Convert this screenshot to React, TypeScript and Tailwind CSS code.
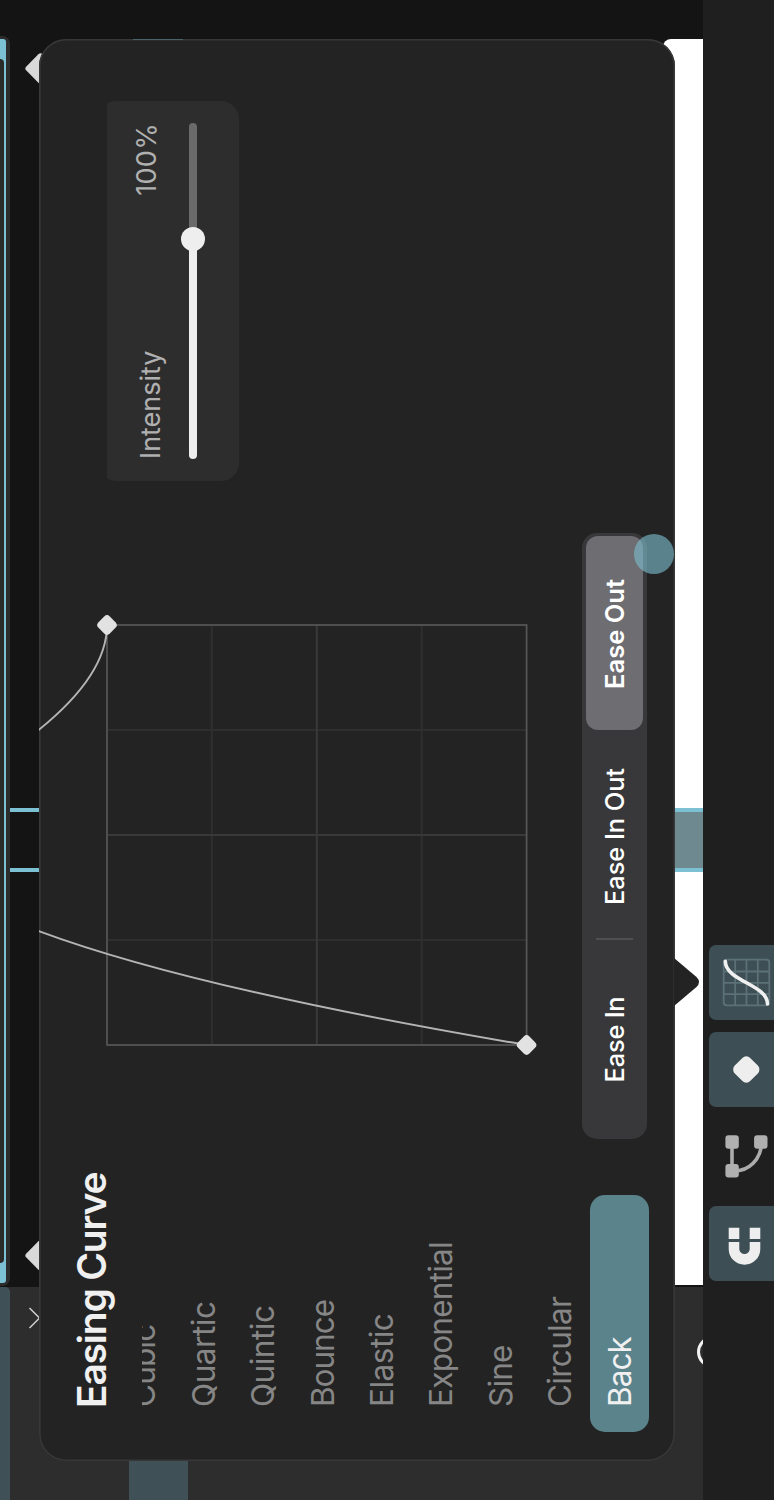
import React from "react";

const CURVES = [
  { name: "Cubic", tracking: "tracking-[-0.85px]" },
  { name: "Quartic", tracking: "tracking-[-0.45px]" },
  { name: "Quintic", tracking: "tracking-[-0.5px]" },
  { name: "Bounce", tracking: "tracking-[-1px]" },
  { name: "Elastic", tracking: "tracking-[-0.5px]" },
  { name: "Exponential", tracking: "tracking-[-0.75px]" },
  { name: "Sine", tracking: "tracking-[-0.8px]" },
  { name: "Circular", tracking: "tracking-[-0.7px]" },
  { name: "Back", tracking: "tracking-[-0.9px]" },
];

function CurveList() {
  return (
    <ul className="flex h-[507px] flex-col justify-end overflow-hidden">
      {CURVES.map(({ name, tracking }) => (
        <li
          key={name}
          className={`flex h-[59.4px] shrink-0 items-center rounded-[15px] pl-[25px] text-[31.5px] leading-none font-normal ${tracking} ${
            name === "Back" ? "bg-[#5a838c] text-[#f0f0f0]" : "text-[#868686]"
          }`}
        >
          {name}
        </li>
      ))}
    </ul>
  );
}

function Graph() {
  return (
    <svg className="block h-[543px] w-[606px]" viewBox="361 39 606 543" fill="none">
      <path
        d="M560 107V527M770 107V527M455 211.8H875M455 421.7H875"
        stroke="#2f2f2f"
        strokeWidth="2"
      />
      <path d="M665 107V527M455 316.8H875" stroke="#393939" strokeWidth="2" />
      <rect x="455" y="107" width="420" height="419.6" stroke="#575757" strokeWidth="1.7" />
      <path
        d="M455 526.6Q510.9 195.2 568.7 39.5C620 -90 700 -40 770.7 39.5Q825.4 107 875 107"
        stroke="#b4b4b4"
        strokeWidth="1.9"
      />
      <rect x="-8" y="-8" width="16" height="16" rx="4" transform="translate(455 526.6) rotate(45)" fill="#e2e2e2" />
      <rect x="-8" y="-8" width="16" height="16" rx="4" transform="translate(875 107) rotate(45)" fill="#e2e2e2" />
    </svg>
  );
}

function Segments() {
  return (
    <div className="flex h-[65px] w-[606px] items-center rounded-[15px] bg-[#38383a] text-[25.5px] text-white">
      <div className="flex w-[199px] justify-center pt-[2px] font-medium tracking-[-0.25px]">Ease In</div>
      <div className="h-[37px] w-[2px] bg-[#505053]" />
      <div className="flex w-[208px] justify-center pt-[2px] pr-[5px] font-medium tracking-[-0.1px]">Ease In Out</div>
      <div className="flex h-[57px] w-[194px] items-center justify-center rounded-[12px] bg-[#6e6d72] pt-[2px] pr-[2px] font-semibold tracking-[0px]">
        Ease Out
      </div>
    </div>
  );
}

function Intensity() {
  return (
    <div className="mt-[68px] h-[132px] w-[380px] overflow-hidden">
      <div className="-mt-2 h-[140px] rounded-[18px] bg-[#2d2d2d] px-[22px] pt-8">
        <div className="flex h-8 justify-between text-[27px] leading-8 font-normal text-[#b0b0b0]">
          <span className="pt-1 tracking-[-0.05px]">Intensity</span>
          <span className="tracking-[0.3px]">100%</span>
        </div>
        <div className="mt-[18px] flex h-6 items-center">
          <div className="h-2 w-[212px] rounded-l-full bg-[#eeeeee]" />
          <div className="relative -mx-1 size-6 shrink-0 rounded-full bg-[#eeeeee]" />
          <div className="h-2 grow rounded-r-full bg-[#6a6a6a]" />
        </div>
      </div>
    </div>
  );
}

function Popover() {
  return (
    <div className="absolute top-[39px] left-[39px]">
      <div className="flex h-[636px] w-[1422px] overflow-hidden rounded-[27px] bg-[#232323] pl-[29px] shadow-[inset_0_0_0_1.6px_#383838]">
        <div className="w-[237px]">
          <h1 className="mt-[29px] mb-[26px] pl-[24px] text-[39px] leading-[48px] font-semibold tracking-[-1.2px] whitespace-nowrap text-[#f0f0f0]">
            Easing Curve
          </h1>
          <CurveList />
        </div>
        <div className="ml-14">
          <Graph />
          <Segments />
        </div>
        <div className="ml-[52px]">
          <Intensity />
        </div>
      </div>
      <svg className="absolute top-[635px] left-[454px] h-[26px] w-[50px]" viewBox="0 0 50 26">
        <path d="M1 0H49L30 22.5Q25 27.5 20 22.5Z" fill="#232323" />
      </svg>
      <div className="absolute top-[595px] left-[887px] size-10 rounded-full bg-[#7abbca]/63" />
      <div className="absolute top-[94px] left-[1421px] h-[50px] w-px bg-[#4c6168]" />
    </div>
  );
}

function Toolbar() {
  const active = "h-[75px] w-[75px] rounded-[7px] bg-[#3d4f55]";
  return (
    <div className="relative flex h-[71px] gap-3 overflow-hidden bg-[#1f1f1f] pt-[6px] pl-[219px]">
      <svg className={active} viewBox="0 0 75 75" fill="#eeeeee">
        <path d="M42 19.7H53.3V30.3H42ZM42 40.7H53.3V51.3H42Z" />
        <path d="M39 19.7H32.1A15.8 15.8 0 0 0 32.1 51.3H39V40.7H32.1A5.2 5.2 0 0 1 32.1 30.3H39Z" />
      </svg>
      <svg className="h-[75px] w-[75px]" viewBox="0 0 75 75" fill="none">
        <path d="M52 23H23C22 40 35 52.5 52 52.5" stroke="#acacac" strokeWidth="3.6" />
        <g fill="#b0b0b0">
          <rect x="45.3" y="16.4" width="13.4" height="13.4" rx="3" />
          <rect x="45.3" y="45.1" width="13.4" height="13.4" rx="3" />
          <rect x="16.6" y="16.4" width="13.4" height="13.4" rx="3" />
        </g>
      </svg>
      <svg className={active} viewBox="0 0 75 75">
        <rect x="-10.9" y="-10.9" width="21.8" height="21.8" rx="5.5" transform="translate(37.5 37.3) rotate(45)" fill="#eeeeee" />
      </svg>
      <svg className={active} viewBox="0 0 75 75" fill="none">
        <g transform="translate(13.5 13.5)">
          <path d="M12.3 1V47M23.7 1V47M35 1V47M1 12.7H47M1 24H47M1 35.3H47" stroke="#5c7077" strokeWidth="1.8" />
          <rect x="1.2" y="1.2" width="45.6" height="45.6" rx="3" stroke="#5c7077" strokeWidth="1.8" />
          <path d="M2.6 45C22 45 25.5 2.8 45.2 2.8" stroke="#f0f0f0" strokeWidth="3.6" strokeLinecap="round" />
        </g>
      </svg>
    </div>
  );
}

function Timeline() {
  return (
    <div className="relative flex h-[703px] overflow-hidden bg-[#141414]">
      <div className="flex w-[213px] flex-col bg-[#2d2d2d]">
        <div className="h-[10px] rounded-br-[5px] bg-[#3f5157]" />
        <div className="mt-[119px] h-[59px] bg-[#3f5157]" />
      </div>
      <div className="ml-px flex w-[1250px] flex-col justify-between">
        <div className="h-[10px] rounded-b-[8px] bg-[#2c2c2c] px-[3px]">
          <div className="h-[6px] rounded-b-[3px] bg-[#7bc0d3] px-[20px]">
            <div className="h-[4px] rounded-b-[4px] bg-[#2a2a28]" />
          </div>
        </div>
        <div className="ml-px h-[40px] w-[1246px] rounded-tr-[8px] bg-white" />
      </div>
      <div className="absolute top-[10px] left-[628px] h-[700px] w-[64px] border-x-4 border-[#7bc0d3]">
        <div className="mt-[653px] h-[40px] bg-[#6f8990]" />
      </div>
      <div className="absolute top-[29px] left-[1420px] size-[23px] rotate-45 rounded-[3px] bg-[#d9d9d9]" />
      <div className="absolute top-[29px] left-[233px] size-[23px] rotate-45 rounded-[3px] bg-[#d9d9d9]" />
      <svg className="absolute top-[28px] left-[170px] h-[14px] w-[24px]" viewBox="0 0 24 14" fill="none">
        <path d="M2 1.5L12 11.5L22 1.5" stroke="#cfcfcf" strokeWidth="1.5" />
      </svg>
      <div className="absolute top-[697px] left-[131.5px] size-8 rounded-full border-3 border-[#f2f2f2]" />
    </div>
  );
}

export default function App() {
  return (
    <div className="h-[1500px] w-[774px] overflow-hidden bg-[#141414] font-['Inter',sans-serif]">
      <div className="relative h-[774px] w-[1500px] origin-top-left translate-y-[1500px] -rotate-90">
        <Timeline />
        <Toolbar />
        <Popover />
      </div>
    </div>
  );
}
